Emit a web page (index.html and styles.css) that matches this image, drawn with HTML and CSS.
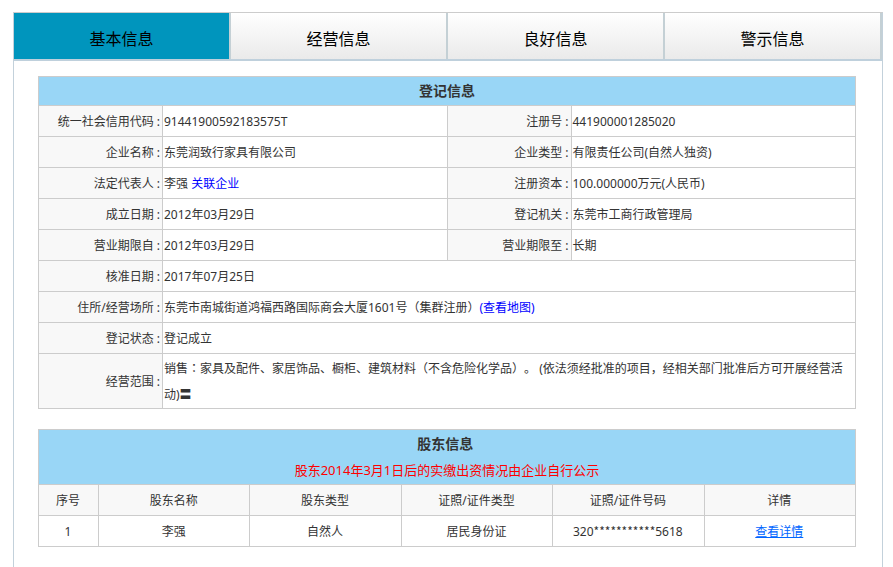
FILE: index.html
```
<!DOCTYPE html>
<html lang="zh-CN">
<head>
<meta charset="utf-8">
<title>企业信息</title>
<link rel="stylesheet" href="styles.css">
</head>
<body>
<main class="panel">
  <nav class="tabs">
    <a class="tab active" href="#basic">基本信息</a>
    <a class="tab" href="#business">经营信息</a>
    <a class="tab" href="#good">良好信息</a>
    <a class="tab" href="#warning">警示信息</a>
  </nav>
  <div class="content" id="basic">
    <table class="info">
      <colgroup><col class="label-col"><col><col class="label-col"><col></colgroup>
      <tr><th class="title" colspan="4">登记信息</th></tr>
      <tr><th scope="row">统一社会信用代码 :</th><td>91441900592183575T</td><th scope="row">注册号 :</th><td>441900001285020</td></tr>
      <tr><th scope="row">企业名称 :</th><td>东莞润致行家具有限公司</td><th scope="row">企业类型 :</th><td>有限责任公司(自然人独资)</td></tr>
      <tr><th scope="row">法定代表人 :</th><td>李强 <a href="#related">关联企业</a></td><th scope="row">注册资本 :</th><td>100.000000万元(人民币)</td></tr>
      <tr><th scope="row">成立日期 :</th><td>2012年03月29日</td><th scope="row">登记机关 :</th><td>东莞市工商行政管理局</td></tr>
      <tr><th scope="row">营业期限自 :</th><td>2012年03月29日</td><th scope="row">营业期限至 :</th><td>长期</td></tr>
      <tr><th scope="row">核准日期 :</th><td colspan="3">2017年07月25日</td></tr>
      <tr><th scope="row">住所/经营场所 :</th><td colspan="3">东莞市南城街道鸿福西路国际商会大厦1601号（集群注册）<a href="#map">(查看地图)</a></td></tr>
      <tr><th scope="row">登记状态 :</th><td colspan="3">登记成立</td></tr>
      <tr><th scope="row">经营范围 :</th><td class="scope" colspan="3">销售<span class="mid" lang="zh-Hant">：</span>家具及配件、家居饰品、橱柜、建筑材料（不含危险化学品）。 (依法须经批准的项目，经相关部门批准后方可开展经营活动)〓</td></tr>
    </table>
    <table class="holders">
      <colgroup><col class="index-col"><col><col><col><col><col></colgroup>
      <thead>
        <tr><th class="title" colspan="6">股东信息&nbsp;<br><span class="notice">股东2014年3月1日后的实缴出资情况由企业自行公示</span></th></tr>
        <tr><th>序号</th><th>股东名称</th><th>股东类型</th><th>证照/证件类型</th><th>证照/证件号码</th><th>详情</th></tr>
      </thead>
      <tbody>
        <tr><td>1</td><td>李强</td><td>自然人</td><td>居民身份证</td><td>320<span class="mask">***********</span>5618</td><td><a class="detail" href="#detail">查看详情</a></td></tr>
      </tbody>
    </table>
  </div>
</main>
</body>
</html>
```
FILE: styles.css
```
body {
  margin: 0;
  background: #fff;
  color: #333;
  font: 12px/26px "Noto Sans", "Noto Sans CJK SC", sans-serif;
  text-spacing-trim: space-all;
}

.panel {
  margin: 12px 10px 0 13px;
  border: 1px solid #c3d1db;
  border-top-color: #ccc;
  border-bottom: 0;
  min-height: calc(100vh - 13px);
}

.tabs {
  display: flex;
  border-bottom: 2px solid #bfd0dc;
}

.tab {
  flex: 1;
  border-right: 2px solid #c4d0d5;
  padding: 13px 0 7px;
  background: linear-gradient(#fff, #eaeaea);
  color: #000;
  font-size: 16px;
  text-align: center;
  text-decoration: none;
}

.tab.active {
  background: #0095bd;
}

.content {
  padding: 15px 26px 20px 24px;
}

table {
  width: 100%;
  table-layout: fixed;
  border-collapse: collapse;
}

th,
td {
  border: 1px solid #ccc;
  padding: 3px 2px 1px 1px;
  font-weight: normal;
}

th {
  background: #f8f8f8;
}

.info th[scope="row"] {
  text-align: right;
}

.info a {
  color: #00f;
  text-decoration: none;
}

.info .scope {
  padding-top: 2px;
  padding-bottom: 0;
}

.title {
  padding: 1px;
  background: #99d6f6;
  font-size: 14px;
  font-weight: bold;
}

.label-col {
  width: 124px;
}

.index-col {
  width: 60px;
}

.holders {
  margin-top: 20px;
}

.holders td {
  text-align: center;
}

.notice {
  color: #f00;
  font-size: 13px;
  font-weight: normal;
}

.detail {
  color: #06f;
}

/* Centred full-width colon */
.mid {
  font-family: "Noto Sans CJK TC", sans-serif;
  line-height: 1;
}

.mask {
  font-family: "Noto Sans CJK SC", sans-serif;
  line-height: 1;
}
```
